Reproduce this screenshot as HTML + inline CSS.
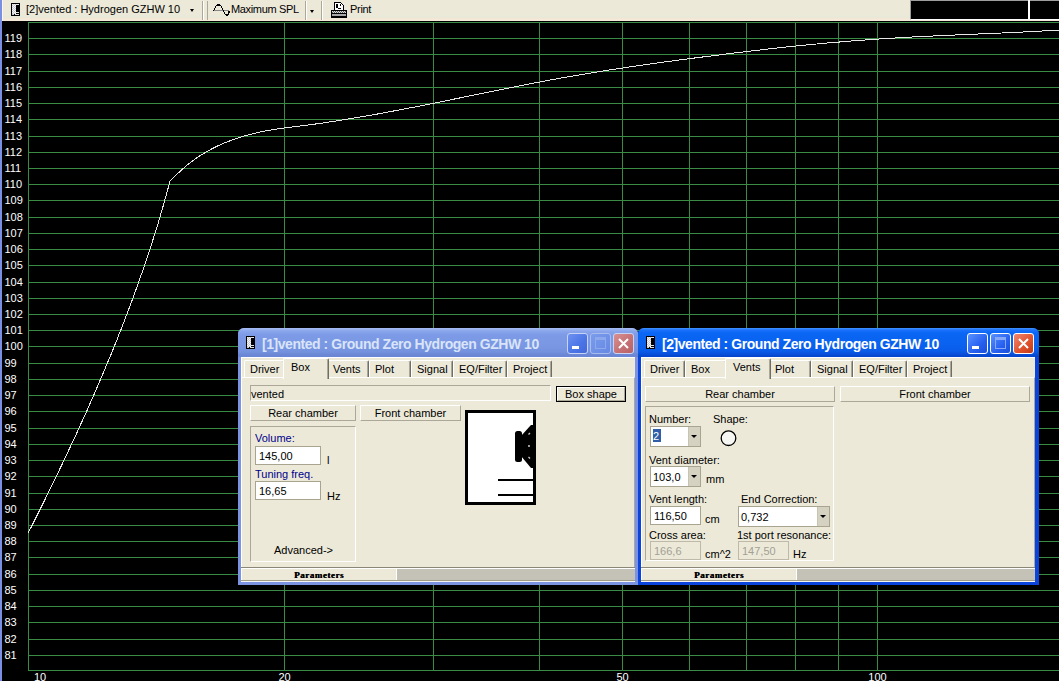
<!DOCTYPE html><html><head><meta charset="utf-8"><style>
*{margin:0;padding:0;box-sizing:border-box}
html,body{width:1059px;height:681px;overflow:hidden;background:#000}
body{position:relative;font-family:"Liberation Sans",sans-serif;font-size:11px;color:#000}
.yl{font-family:"Liberation Sans",sans-serif;font-size:11px;fill:#fff}
.a{position:absolute}
.t{position:absolute;white-space:nowrap;line-height:13px;font-size:11px}
.win{position:absolute;overflow:hidden}
.tab{position:absolute;background:#ECE9D8;border-top:1px solid #fff;border-left:1px solid #fff;border-right:1px solid #716F64;box-shadow:inset -1px 0 0 #ACA899;border-radius:2px 2px 0 0}
.btn{position:absolute;background:#ECE9D8;border-top:1px solid #fff;border-left:1px solid #fff;border-right:1px solid #ACA899;border-bottom:1px solid #ACA899;text-align:center;line-height:15px}
.sunk{position:absolute;border-top:1px solid #ACA899;border-left:1px solid #ACA899;border-right:1px solid #fff;border-bottom:1px solid #fff}
.edit{position:absolute;background:#fff;border:1px solid #A9A48F;line-height:15px;padding-left:3px;padding-top:2px}
.navy{color:#00008C}
.gray{color:#A3A095}
</style></head><body><svg width="1059" height="681" style="position:absolute;left:0;top:0" shape-rendering="crispEdges"><rect x="28" y="22" width="1031" height="1" fill="#3a8c44"/><rect x="28" y="38" width="1031" height="1" fill="#3a8c44"/><rect x="28" y="54" width="1031" height="1" fill="#3a8c44"/><rect x="28" y="71" width="1031" height="1" fill="#3a8c44"/><rect x="28" y="87" width="1031" height="1" fill="#3a8c44"/><rect x="28" y="103" width="1031" height="1" fill="#3a8c44"/><rect x="28" y="119" width="1031" height="1" fill="#3a8c44"/><rect x="28" y="136" width="1031" height="1" fill="#3a8c44"/><rect x="28" y="152" width="1031" height="1" fill="#3a8c44"/><rect x="28" y="168" width="1031" height="1" fill="#3a8c44"/><rect x="28" y="184" width="1031" height="1" fill="#3a8c44"/><rect x="28" y="200" width="1031" height="1" fill="#3a8c44"/><rect x="28" y="217" width="1031" height="1" fill="#3a8c44"/><rect x="28" y="233" width="1031" height="1" fill="#3a8c44"/><rect x="28" y="249" width="1031" height="1" fill="#3a8c44"/><rect x="28" y="265" width="1031" height="1" fill="#3a8c44"/><rect x="28" y="282" width="1031" height="1" fill="#3a8c44"/><rect x="28" y="298" width="1031" height="1" fill="#3a8c44"/><rect x="28" y="314" width="1031" height="1" fill="#3a8c44"/><rect x="28" y="330" width="1031" height="1" fill="#3a8c44"/><rect x="28" y="346" width="1031" height="1" fill="#3a8c44"/><rect x="28" y="363" width="1031" height="1" fill="#3a8c44"/><rect x="28" y="379" width="1031" height="1" fill="#3a8c44"/><rect x="28" y="395" width="1031" height="1" fill="#3a8c44"/><rect x="28" y="411" width="1031" height="1" fill="#3a8c44"/><rect x="28" y="428" width="1031" height="1" fill="#3a8c44"/><rect x="28" y="444" width="1031" height="1" fill="#3a8c44"/><rect x="28" y="460" width="1031" height="1" fill="#3a8c44"/><rect x="28" y="476" width="1031" height="1" fill="#3a8c44"/><rect x="28" y="493" width="1031" height="1" fill="#3a8c44"/><rect x="28" y="509" width="1031" height="1" fill="#3a8c44"/><rect x="28" y="525" width="1031" height="1" fill="#3a8c44"/><rect x="28" y="541" width="1031" height="1" fill="#3a8c44"/><rect x="28" y="557" width="1031" height="1" fill="#3a8c44"/><rect x="28" y="574" width="1031" height="1" fill="#3a8c44"/><rect x="28" y="590" width="1031" height="1" fill="#3a8c44"/><rect x="28" y="606" width="1031" height="1" fill="#3a8c44"/><rect x="28" y="622" width="1031" height="1" fill="#3a8c44"/><rect x="28" y="639" width="1031" height="1" fill="#3a8c44"/><rect x="28" y="655" width="1031" height="1" fill="#3a8c44"/><rect x="28" y="670" width="1031" height="1" fill="#3a8c44"/><rect x="28" y="22" width="1" height="649" fill="#3a8c44"/><rect x="284" y="22" width="1" height="649" fill="#3a8c44"/><rect x="433" y="22" width="1" height="649" fill="#3a8c44"/><rect x="539" y="22" width="1" height="649" fill="#3a8c44"/><rect x="622" y="22" width="1" height="649" fill="#3a8c44"/><rect x="689" y="22" width="1" height="649" fill="#3a8c44"/><rect x="746" y="22" width="1" height="649" fill="#3a8c44"/><rect x="795" y="22" width="1" height="649" fill="#3a8c44"/><rect x="838" y="22" width="1" height="649" fill="#3a8c44"/><rect x="877" y="22" width="1" height="649" fill="#3a8c44"/><text x="4.5" y="42" class="yl">119</text><text x="4.5" y="58" class="yl">118</text><text x="4.5" y="75" class="yl">117</text><text x="4.5" y="91" class="yl">116</text><text x="4.5" y="107" class="yl">115</text><text x="4.5" y="123" class="yl">114</text><text x="4.5" y="140" class="yl">113</text><text x="4.5" y="156" class="yl">112</text><text x="4.5" y="172" class="yl">111</text><text x="4.5" y="188" class="yl">110</text><text x="4.5" y="204" class="yl">109</text><text x="4.5" y="221" class="yl">108</text><text x="4.5" y="237" class="yl">107</text><text x="4.5" y="253" class="yl">106</text><text x="4.5" y="269" class="yl">105</text><text x="4.5" y="286" class="yl">104</text><text x="4.5" y="302" class="yl">103</text><text x="4.5" y="318" class="yl">102</text><text x="4.5" y="334" class="yl">101</text><text x="4.5" y="350" class="yl">100</text><text x="4.5" y="367" class="yl">99</text><text x="4.5" y="383" class="yl">98</text><text x="4.5" y="399" class="yl">97</text><text x="4.5" y="415" class="yl">96</text><text x="4.5" y="432" class="yl">95</text><text x="4.5" y="448" class="yl">94</text><text x="4.5" y="464" class="yl">93</text><text x="4.5" y="480" class="yl">92</text><text x="4.5" y="497" class="yl">91</text><text x="4.5" y="513" class="yl">90</text><text x="4.5" y="529" class="yl">89</text><text x="4.5" y="545" class="yl">88</text><text x="4.5" y="561" class="yl">87</text><text x="4.5" y="578" class="yl">86</text><text x="4.5" y="594" class="yl">85</text><text x="4.5" y="610" class="yl">84</text><text x="4.5" y="626" class="yl">83</text><text x="4.5" y="643" class="yl">82</text><text x="4.5" y="659" class="yl">81</text><text x="34" y="681" text-anchor="start" class="yl">10</text><text x="284.5" y="681" text-anchor="middle" class="yl">20</text><text x="622.5" y="681" text-anchor="middle" class="yl">50</text><text x="877.5" y="681" text-anchor="middle" class="yl">100</text><polyline points="28.0,533.4 30.0,529.4 32.0,525.5 34.0,521.5 36.0,517.6 38.0,513.6 40.0,509.6 41.9,505.7 43.9,501.7 45.8,497.8 47.8,493.8 49.7,489.8 51.7,485.9 53.6,481.9 55.5,478.0 57.4,474.0 59.3,470.0 61.2,466.1 63.1,462.1 65.0,458.2 66.9,454.2 68.7,450.2 70.6,446.3 72.4,442.3 74.3,438.4 76.1,434.4 77.9,430.5 79.7,426.5 81.5,422.5 83.3,418.6 85.1,414.6 86.9,410.7 88.6,406.7 90.4,402.7 92.1,398.8 93.9,394.8 95.6,390.9 97.3,386.9 99.0,382.9 100.7,379.0 102.4,375.0 104.1,371.1 105.7,367.1 107.4,363.1 109.0,359.2 110.7,355.2 112.3,351.3 113.9,347.3 115.5,343.3 117.1,339.4 118.6,335.4 120.2,331.5 121.8,327.5 123.3,323.5 124.8,319.6 126.3,315.6 127.8,311.7 129.3,307.7 130.8,303.7 132.3,299.8 133.7,295.8 135.2,291.9 136.6,287.9 138.0,283.9 139.4,280.0 140.8,276.0 142.2,272.1 143.6,268.1 144.9,264.2 146.2,260.2 147.6,256.2 148.9,252.3 150.2,248.3 151.5,244.4 152.7,240.4 154.0,236.4 155.2,232.5 156.4,228.5 157.7,224.6 158.9,220.6 160.0,216.6 161.2,212.7 162.4,208.7 163.5,204.8 164.6,200.8 165.7,196.8 166.8,192.9 167.9,188.9 169.0,185.0 170.0,181.0 172.2,179.0 174.4,176.8 176.6,174.6 178.8,172.5 181.0,170.4 183.2,168.5 185.4,166.6 187.6,164.7 189.8,163.0 192.0,161.3 194.2,159.7 196.4,158.1 198.7,156.6 200.9,155.2 203.1,153.8 205.3,152.5 207.5,151.2 209.7,150.0 211.9,148.8 214.1,147.7 216.3,146.6 218.5,145.6 220.7,144.6 222.9,143.6 225.1,142.7 227.3,141.8 229.5,141.0 231.7,140.1 233.9,139.3 236.1,138.6 238.3,137.9 240.5,137.2 242.7,136.5 244.9,135.8 247.1,135.2 249.3,134.6 251.5,134.1 253.7,133.5 255.9,133.0 258.1,132.5 260.3,132.0 262.5,131.6 264.7,131.1 267.0,130.7 269.2,130.3 271.4,129.9 273.6,129.5 275.8,129.2 278.0,128.8 280.2,128.5 282.4,128.2 284.6,127.9 286.8,127.6 289.0,127.3 291.2,127.1 293.4,126.8 295.6,126.6 297.8,126.3 300.0,126.0 306.4,125.2 312.8,124.4 319.1,123.5 325.5,122.6 331.9,121.6 338.3,120.6 344.6,119.6 351.0,118.6 357.4,117.5 363.8,116.4 370.2,115.3 376.5,114.2 382.9,113.0 389.3,111.8 395.7,110.6 402.1,109.4 408.4,108.2 414.8,107.0 421.2,105.7 427.6,104.5 433.9,103.2 440.3,101.9 446.7,100.6 453.1,99.3 459.5,98.0 465.8,96.7 472.2,95.4 478.6,94.1 485.0,92.8 491.3,91.5 497.7,90.2 504.1,88.9 510.5,87.7 516.9,86.4 523.2,85.2 529.6,83.9 536.0,82.7 542.4,81.5 548.7,80.3 555.1,79.2 561.5,78.0 567.9,76.9 574.3,75.8 580.6,74.7 587.0,73.6 593.4,72.6 599.8,71.5 606.2,70.5 612.5,69.5 618.9,68.6 625.3,67.6 631.7,66.6 638.0,65.7 644.4,64.8 650.8,63.9 657.2,63.0 663.6,62.1 669.9,61.3 676.3,60.4 682.7,59.6 689.1,58.7 695.4,57.9 701.8,57.1 708.2,56.3 714.6,55.5 721.0,54.7 727.3,53.9 733.7,53.1 740.1,52.3 746.5,51.6 752.8,50.8 759.2,50.1 765.6,49.3 772.0,48.6 778.4,47.9 784.7,47.2 791.1,46.5 797.5,45.9 803.9,45.2 810.3,44.6 816.6,44.0 823.0,43.4 829.4,42.8 835.8,42.3 842.1,41.8 848.5,41.2 854.9,40.7 861.3,40.3 867.7,39.8 874.0,39.3 880.4,38.9 886.8,38.5 893.2,38.1 899.5,37.7 905.9,37.4 912.3,37.0 918.7,36.7 925.1,36.4 931.4,36.1 937.8,35.8 944.2,35.5 950.6,35.2 956.9,34.9 963.3,34.6 969.7,34.4 976.1,34.1 982.5,33.8 988.8,33.5 995.2,33.3 1001.6,33.0 1008.0,32.7 1014.4,32.4 1020.7,32.1 1027.1,31.8 1033.5,31.5 1039.9,31.1 1046.2,30.8 1052.6,30.5 1059.0,30.1" fill="none" stroke="#e8e8e8" stroke-width="1" shape-rendering="crispEdges"/></svg><div class="a" style="left:0;top:0;width:2px;height:681px;background:#7B8FE2"></div><div class="a" style="left:2px;top:0;width:1px;height:21px;background:#F8F6EE;z-index:1"></div><div class="a" style="left:2px;top:0;width:1057px;height:21px;background:linear-gradient(#ECE9D8 0,#ECE9D8 15px,#E7EADB 16px,#E7EADB 17px,#F1E5D3 18px,#F5EADA 20px,#F5EADA 21px)"></div><svg class="a" style="left:11px;top:3px" width="9" height="13" shape-rendering="crispEdges"><rect width="9" height="13" fill="#000"/><rect x="1" y="1" width="4" height="10" fill="#c8c8d0"/><path d="M1 1h1v1h-1zM3 1h1v1h-1zM2 2h1v1h-1zM4 2h1v1h-1zM1 3h1v1h-1zM3 3h1v1h-1zM2 4h1v1h-1zM4 4h1v1h-1zM1 5h1v1h-1zM3 5h1v1h-1zM2 6h1v1h-1zM4 6h1v1h-1zM1 7h1v1h-1zM3 7h1v1h-1zM2 8h1v1h-1zM4 8h1v1h-1zM1 9h1v1h-1zM3 9h1v1h-1zM2 10h1v1h-1zM4 10h1v1h-1z" fill="#f4f4f4"/><rect x="5" y="1" width="3" height="1" fill="#e8e8e8"/><rect x="4" y="9" width="4" height="1" fill="#e0e0e0"/><rect x="4" y="11" width="4" height="1" fill="#e0e0e0"/><rect x="1" y="11" width="2" height="1" fill="#c8c8d0"/></svg><div class="t" style="left:26px;top:3px;font-size:11px">[2]vented : Hydrogen GZHW 10</div><div class="a" style="left:190px;top:9px;width:0;height:0;border-left:2.5px solid transparent;border-right:2.5px solid transparent;border-top:3px solid #000"></div><div class="a" style="left:202px;top:1px;width:1px;height:19px;background:#ACA899"></div><div class="a" style="left:203px;top:1px;width:1px;height:19px;background:#fff"></div><div class="a" style="left:207px;top:1px;width:1px;height:19px;background:#ACA899"></div><svg class="a" style="left:212px;top:4px" width="18" height="13" shape-rendering="crispEdges"><rect x="1" y="6" width="16" height="1" fill="#888"/><path d="M1 7 L2 6 L3 4 L4 2 L5 1 L8 1 L9 2 L10 4 L11 6 L12 8 L13 10 L14 11 L16 11 L17 9 L17 7" fill="none" stroke="#000" stroke-width="1.2"/></svg><div class="t" style="left:231px;top:3px;font-size:11px;letter-spacing:-0.35px">Maximum SPL</div><div class="a" style="left:305px;top:1px;width:1px;height:19px;background:#ACA899"></div><div class="a" style="left:306px;top:1px;width:1px;height:19px;background:#fff"></div><div class="a" style="left:310px;top:10px;width:0;height:0;border-left:2.5px solid transparent;border-right:2.5px solid transparent;border-top:3px solid #000"></div><div class="a" style="left:321px;top:1px;width:1px;height:19px;background:#ACA899"></div><div class="a" style="left:322px;top:1px;width:1px;height:19px;background:#fff"></div><svg class="a" style="left:331px;top:2px" width="17" height="16" shape-rendering="crispEdges"><path d="M3.5 0.5 H9.5 L12.5 3.5 V8.5 H3.5 Z" fill="#fff" stroke="#000"/><rect x="5" y="2" width="2" height="3" fill="#000"/><rect x="5" y="5" width="2" height="1" fill="#000"/><rect x="7" y="6" width="3" height="1" fill="#000"/><rect x="9" y="2" width="1" height="2" fill="#000"/><rect x="0" y="8" width="16" height="8" rx="1" fill="#000"/><path d="M1 9h1v1h-1zM3 9h1v1h-1zM5 9h1v1h-1zM7 9h1v1h-1zM9 9h1v1h-1zM11 9h1v1h-1zM13 9h1v1h-1zM2 10h1v1h-1zM4 10h1v1h-1zM6 10h1v1h-1zM8 10h1v1h-1zM10 10h1v1h-1zM12 10h1v1h-1zM14 10h1v1h-1z" fill="#fff"/><rect x="1" y="9" width="14" height="2" fill="#bbb" fill-opacity="0.5"/><rect x="1" y="12" width="14" height="2" fill="#a8a8a8"/></svg><div class="t" style="left:350px;top:3px;font-size:11px;letter-spacing:-0.3px">Print</div><div class="a" style="left:910px;top:0;width:149px;height:20px;background:#000;border-top:1px solid #9d9d9d;border-left:1px solid #9d9d9d;border-bottom:1px solid #fff"></div><div class="a" style="left:1028px;top:0;width:2px;height:20px;background:#fff"></div><div class="win" style="left:238px;top:328px;width:400px;height:257px;background:#7C93E2;border-radius:6px 6px 0 0"><div class="a" style="left:0;top:0;width:400px;height:29px;background:linear-gradient(#A7BCF2 0,#8AA6EC 3px,#7C9AE6 7px,#7A97E3 18px,#7391DD 24px,#6A86D4 27px)"></div><svg class="a" style="left:8px;top:8px" width="9" height="13" shape-rendering="crispEdges"><rect width="9" height="13" fill="#000"/><rect x="1" y="1" width="4" height="10" fill="#c8c8d0"/><path d="M1 1h1v1h-1zM3 1h1v1h-1zM2 2h1v1h-1zM4 2h1v1h-1zM1 3h1v1h-1zM3 3h1v1h-1zM2 4h1v1h-1zM4 4h1v1h-1zM1 5h1v1h-1zM3 5h1v1h-1zM2 6h1v1h-1zM4 6h1v1h-1zM1 7h1v1h-1zM3 7h1v1h-1zM2 8h1v1h-1zM4 8h1v1h-1zM1 9h1v1h-1zM3 9h1v1h-1zM2 10h1v1h-1zM4 10h1v1h-1z" fill="#f4f4f4"/><rect x="5" y="1" width="3" height="1" fill="#e8e8e8"/><rect x="4" y="9" width="4" height="1" fill="#e0e0e0"/><rect x="4" y="11" width="4" height="1" fill="#e0e0e0"/><rect x="1" y="11" width="2" height="1" fill="#c8c8d0"/></svg><div class="t" style="left:24px;top:8px;font-size:14px;font-weight:bold;color:#D9E4F8;line-height:16px;letter-spacing:-0.45px">[1]vented : Ground Zero Hydrogen GZHW 10</div><div class="a" style="left:329px;top:5px;width:21px;height:21px;border:1px solid #C8D4F4;border-radius:3px;background:linear-gradient(135deg,#6E92F0,#4A74E6 60%,#4468DA)"></div><div class="a" style="left:334px;top:18px;width:7px;height:3px;background:#fff"></div><div class="a" style="left:352px;top:5px;width:21px;height:21px;border:1px solid #A8BCEE;border-radius:3px;background:linear-gradient(135deg,#7A9CEC,#6688E2)"></div><div class="a" style="left:357px;top:9px;width:11px;height:12px;border:1px solid #8EA8EE;border-top-width:3px"></div><div class="a" style="left:375px;top:5px;width:21px;height:21px;border:1px solid #C8D4F4;border-radius:3px;background:linear-gradient(135deg,#D89090,#C46F74 60%,#B86268)"></div><svg class="a" style="left:375px;top:5px" width="21" height="21"><path d="M6 6 L15 15 M15 6 L6 15" stroke="#fff" stroke-width="2"/></svg><div class="a" style="left:3px;top:29px;width:394px;height:223px;background:#ECE9D8"><div class="a" style="left:0;top:0;width:394px;height:1px;background:#fff"></div><div class="a" style="left:0;top:0;width:1px;height:223px;background:#fff"></div><div class="a" style="left:0;top:20px;width:394px;height:191px;border-top:1px solid #fff;border-left:1px solid #fff;border-right:1px solid #ACA899"></div><div class="tab" style="left:3px;top:3px;width:41px;height:17px"></div><div class="t" style="left:9px;top:6px">Driver</div><div class="tab" style="left:42px;top:1px;width:46px;height:21px;border-bottom:none;z-index:2"></div><div class="t" style="left:50px;top:4px;z-index:3">Box</div><div class="tab" style="left:86px;top:3px;width:42px;height:17px"></div><div class="t" style="left:92px;top:6px">Vents</div><div class="tab" style="left:128px;top:3px;width:42px;height:17px"></div><div class="t" style="left:134px;top:6px">Plot</div><div class="tab" style="left:170px;top:3px;width:42px;height:17px"></div><div class="t" style="left:176px;top:6px">Signal</div><div class="tab" style="left:212px;top:3px;width:54px;height:17px"></div><div class="t" style="left:218px;top:6px">EQ/Filter</div><div class="tab" style="left:266px;top:3px;width:45px;height:17px"></div><div class="t" style="left:272px;top:6px">Project</div><div class="sunk" style="left:9px;top:28px;width:301px;height:16px;"></div><div class="t" style="left:10px;top:31px">vented</div><div class="a" style="left:315px;top:29px;width:70px;height:16px;border:1px solid #000;background:#ECE9D8"><div class="btn" style="left:0;top:0;width:68px;height:14px;line-height:12px">Box shape</div></div><div class="btn" style="left:9px;top:48px;width:106px;height:16px;">Rear chamber</div><div class="btn" style="left:119px;top:48px;width:101px;height:16px;">Front chamber</div><div class="sunk" style="left:9px;top:69px;width:106px;height:136px;"></div><div class="t navy" style="left:14px;top:75px">Volume:</div><div class="edit" style="left:14px;top:89px;width:66px;height:19px;">145,00</div><div class="t" style="left:86px;top:97px">l</div><div class="t navy" style="left:14px;top:111px">Tuning freq.</div><div class="edit" style="left:14px;top:124px;width:66px;height:19px;">16,65</div><div class="t" style="left:86px;top:133px">Hz</div><div class="t" style="left:33px;top:187px">Advanced-&gt;</div><div class="a" style="left:224px;top:53px;width:71px;height:95px;background:#fff;border:3px solid #000"></div><svg class="a" style="left:224px;top:53px" width="71" height="95"><rect x="50" y="21" width="7" height="31" rx="2.5" fill="#000"/><path d="M56 26 L66 15 L68 15 L68 58 L66 58 L56 46 Z" fill="#000"/><path d="M63.5 24.5 L65 23" stroke="#ccc" stroke-width="1.3"/><circle cx="64" cy="36" r="1" fill="#ccc"/><path d="M63.5 47 L65 48.5" stroke="#ccc" stroke-width="1.3"/><rect x="33" y="69" width="36" height="2" fill="#000"/><rect x="33" y="84" width="36" height="2" fill="#000"/></svg><div class="a" style="left:0;top:210px;width:394px;height:1px;background:#8A8678"></div><div class="a" style="left:0;top:211px;width:394px;height:1px;background:#fff"></div><div class="a" style="left:0;top:223px;width:394px;height:1px;background:#A09C88"></div><div class="a" style="left:0;top:224px;width:394px;height:1px;background:#F4F4F0"></div><div class="a" style="left:155px;top:212px;width:239px;height:11px;background:#C4C1B6;border-left:1px solid #fff"></div><div class="t" style="left:53px;top:212px;font-family:'Liberation Serif',serif;font-weight:bold;font-size:9px;line-height:12px;letter-spacing:0.55px;text-shadow:0.4px 0 0 #000">Parameters</div></div></div><div class="win" style="left:638px;top:328px;width:401px;height:257px;background:#0A44DC;border-radius:6px 6px 0 0"><div class="a" style="left:0;top:0;width:401px;height:29px;background:linear-gradient(#4494FF 0,#1A72FA 2px,#0A66F4 5px,#0A62F0 16px,#0A5CEA 23px,#0850DC 26px,#0646CC 28px)"></div><svg class="a" style="left:8px;top:8px" width="9" height="13" shape-rendering="crispEdges"><rect width="9" height="13" fill="#000"/><rect x="1" y="1" width="4" height="10" fill="#c8c8d0"/><path d="M1 1h1v1h-1zM3 1h1v1h-1zM2 2h1v1h-1zM4 2h1v1h-1zM1 3h1v1h-1zM3 3h1v1h-1zM2 4h1v1h-1zM4 4h1v1h-1zM1 5h1v1h-1zM3 5h1v1h-1zM2 6h1v1h-1zM4 6h1v1h-1zM1 7h1v1h-1zM3 7h1v1h-1zM2 8h1v1h-1zM4 8h1v1h-1zM1 9h1v1h-1zM3 9h1v1h-1zM2 10h1v1h-1zM4 10h1v1h-1z" fill="#f4f4f4"/><rect x="5" y="1" width="3" height="1" fill="#e8e8e8"/><rect x="4" y="9" width="4" height="1" fill="#e0e0e0"/><rect x="4" y="11" width="4" height="1" fill="#e0e0e0"/><rect x="1" y="11" width="2" height="1" fill="#c8c8d0"/></svg><div class="t" style="left:24px;top:8px;font-size:14px;font-weight:bold;color:#fff;line-height:16px;letter-spacing:-0.45px">[2]vented : Ground Zero Hydrogen GZHW 10</div><div class="a" style="left:329px;top:5px;width:21px;height:21px;border:1px solid #fff;border-radius:3px;background:linear-gradient(135deg,#5A93FF,#2660F0 60%,#1A4FD8)"></div><div class="a" style="left:334px;top:18px;width:7px;height:3px;background:#fff"></div><div class="a" style="left:352px;top:5px;width:21px;height:21px;border:1px solid #fff;border-radius:3px;background:linear-gradient(135deg,#5A93FF,#2660F0 60%,#1A4FD8)"></div><div class="a" style="left:357px;top:9px;width:11px;height:12px;border:1px solid #86A8F6;border-top-width:3px"></div><div class="a" style="left:375px;top:5px;width:21px;height:21px;border:1px solid #fff;border-radius:3px;background:linear-gradient(135deg,#F08870,#E0502A 60%,#C03A18)"></div><svg class="a" style="left:375px;top:5px" width="21" height="21"><path d="M6 6 L15 15 M15 6 L6 15" stroke="#fff" stroke-width="2"/></svg><div class="a" style="left:3px;top:29px;width:394px;height:223px;background:#ECE9D8"><div class="a" style="left:0;top:0;width:394px;height:1px;background:#fff"></div><div class="a" style="left:0;top:0;width:1px;height:223px;background:#fff"></div><div class="a" style="left:0;top:20px;width:394px;height:191px;border-top:1px solid #fff;border-left:1px solid #fff;border-right:1px solid #ACA899"></div><div class="tab" style="left:3px;top:3px;width:41px;height:17px"></div><div class="t" style="left:9px;top:6px">Driver</div><div class="tab" style="left:44px;top:3px;width:42px;height:17px"></div><div class="t" style="left:50px;top:6px">Box</div><div class="tab" style="left:84px;top:1px;width:46px;height:21px;border-bottom:none;z-index:2"></div><div class="t" style="left:92px;top:4px;z-index:3">Vents</div><div class="tab" style="left:128px;top:3px;width:42px;height:17px"></div><div class="t" style="left:134px;top:6px">Plot</div><div class="tab" style="left:170px;top:3px;width:42px;height:17px"></div><div class="t" style="left:176px;top:6px">Signal</div><div class="tab" style="left:212px;top:3px;width:54px;height:17px"></div><div class="t" style="left:218px;top:6px">EQ/Filter</div><div class="tab" style="left:266px;top:3px;width:45px;height:17px"></div><div class="t" style="left:272px;top:6px">Project</div><div class="btn" style="left:4px;top:29px;width:190px;height:16px;">Rear chamber</div><div class="btn" style="left:199px;top:29px;width:190px;height:16px;">Front chamber</div><div class="sunk" style="left:4px;top:49px;width:189px;height:155px;"></div><div class="t" style="left:8px;top:56px">Number:</div><div class="t" style="left:72px;top:56px">Shape:</div><div class="a" style="left:9px;top:69px;width:51px;height:21px;background:#fff;border:1px solid #A9A48F"><div class="a" style="left:2px;top:2px;width:8px;height:13px;background:#2F5FA8"></div><div class="t" style="left:2px;top:3px;color:#fff">2</div><div class="a" style="left:37px;top:0;width:12px;height:19px;background:#D6D2C2;border-left:1px solid #C8C4B4"></div><div class="a" style="left:40px;top:8px;width:0;height:0;border-left:3px solid transparent;border-right:3px solid transparent;border-top:3px solid #000"></div></div><svg class="a" style="left:79px;top:73px" width="18" height="17"><circle cx="8.5" cy="8.2" r="7.3" fill="#F6F6F2" stroke="#000" stroke-width="1.3"/></svg><div class="t" style="left:8px;top:97px">Vent diameter:</div><div class="a" style="left:9px;top:109px;width:51px;height:21px;background:#fff;border:1px solid #A9A48F"><div class="t" style="left:2px;top:4px">103,0</div><div class="a" style="left:37px;top:0;width:12px;height:19px;background:#D6D2C2;border-left:1px solid #C8C4B4"></div><div class="a" style="left:40px;top:8px;width:0;height:0;border-left:3px solid transparent;border-right:3px solid transparent;border-top:3px solid #000"></div></div><div class="t" style="left:65px;top:116px">mm</div><div class="t" style="left:8px;top:136px">Vent length:</div><div class="t" style="left:100px;top:136px">End Correction:</div><div class="edit" style="left:9px;top:149px;width:51px;height:19px;">116,50</div><div class="t" style="left:64px;top:156px">cm</div><div class="a" style="left:97px;top:149px;width:92px;height:21px;background:#fff;border:1px solid #A9A48F"><div class="t" style="left:2px;top:4px">0,732</div><div class="a" style="left:78px;top:0;width:12px;height:19px;background:#D6D2C2;border-left:1px solid #C8C4B4"></div><div class="a" style="left:81px;top:8px;width:0;height:0;border-left:3px solid transparent;border-right:3px solid transparent;border-top:3px solid #000"></div></div><div class="t" style="left:8px;top:172px">Cross area:</div><div class="t" style="left:96px;top:172px">1st port resonance:</div><div class="edit gray" style="left:9px;top:184px;width:51px;height:19px;background:#ECE9D8;border-color:#BEB9A8">166,6</div><div class="t" style="left:64px;top:191px">cm^2</div><div class="edit gray" style="left:97px;top:184px;width:51px;height:19px;background:#ECE9D8;border-color:#BEB9A8">147,50</div><div class="t" style="left:152px;top:191px">Hz</div><div class="a" style="left:0;top:210px;width:394px;height:1px;background:#8A8678"></div><div class="a" style="left:0;top:211px;width:394px;height:1px;background:#fff"></div><div class="a" style="left:0;top:223px;width:394px;height:1px;background:#A09C88"></div><div class="a" style="left:0;top:224px;width:394px;height:1px;background:#F4F4F0"></div><div class="a" style="left:155px;top:212px;width:239px;height:11px;background:#C4C1B6;border-left:1px solid #fff"></div><div class="t" style="left:53px;top:212px;font-family:'Liberation Serif',serif;font-weight:bold;font-size:9px;line-height:12px;letter-spacing:0.55px;text-shadow:0.4px 0 0 #000">Parameters</div></div></div></body></html>
